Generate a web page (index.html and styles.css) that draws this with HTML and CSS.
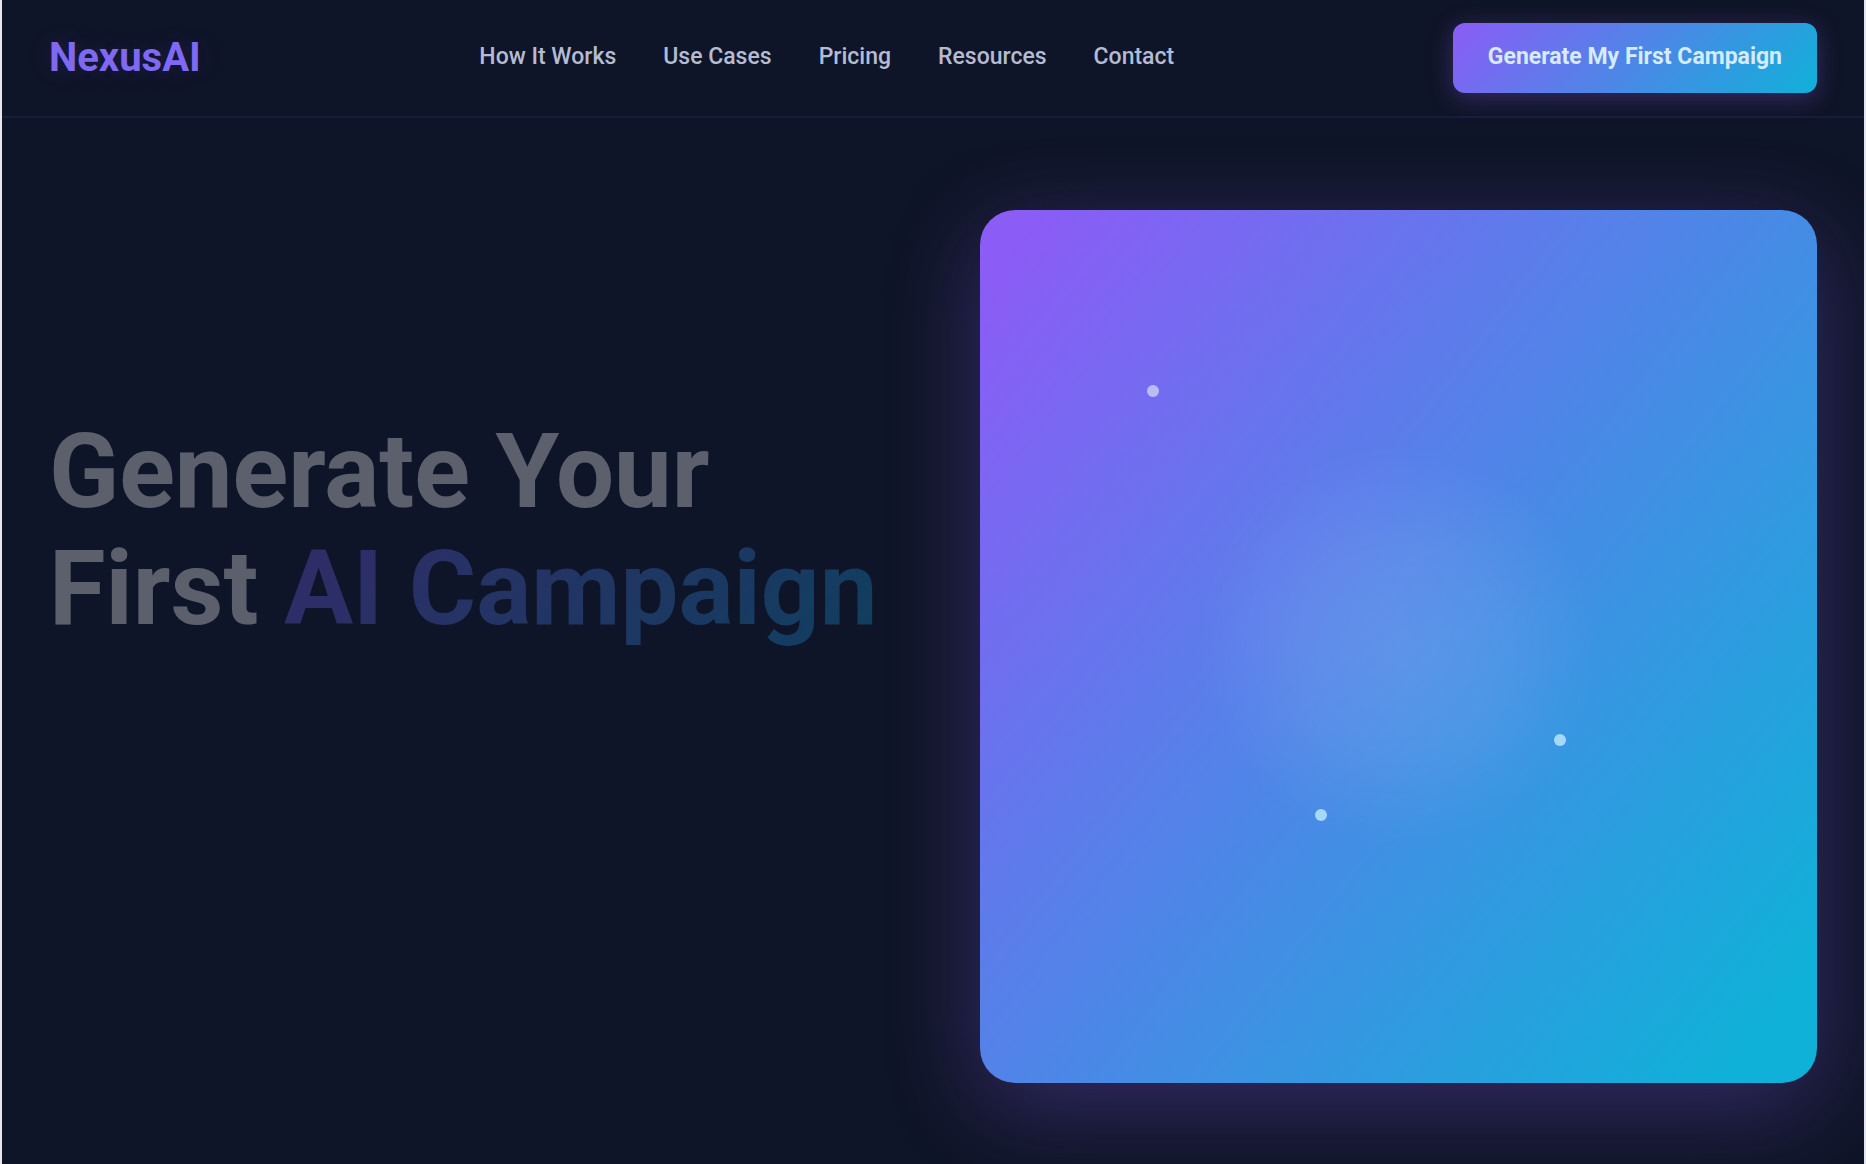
FILE: index.html
```html
<!DOCTYPE html>
<html lang="en">
<head>
  <meta charset="utf-8">
  <meta name="viewport" content="width=device-width, initial-scale=1">
  <title>NexusAI</title>
  <link rel="stylesheet" href="styles.css">
</head>
<body>
  <header class="header">
    <a class="logo" href="#">NexusAI</a>
    <nav class="nav" aria-label="Main">
      <a class="nav-link" href="#how">How It Works</a>
      <a class="nav-link" href="#cases">Use Cases</a>
      <a class="nav-link" href="#pricing">Pricing</a>
      <a class="nav-link" href="#resources">Resources</a>
      <a class="nav-link" href="#contact">Contact</a>
    </nav>
    <button class="cta" type="button">Generate My First Campaign</button>
  </header>
  <main class="hero">
    <div class="hero-copy">
      <h1 class="hero-title">Generate Your<br>First <span class="accent">AI Campaign</span></h1>
    </div>
    <div class="visual">
      <span class="dot dot-one"></span>
      <span class="dot dot-two"></span>
      <span class="dot dot-three"></span>
    </div>
  </main>
</body>
</html>
```
FILE: styles.css
```css
:root {
  --bg: #0f1528;
  --violet: #8b5cf6;
  --cyan: #0fb1d8;
}

* {
  box-sizing: border-box;
}

body {
  margin: 0;
  min-height: 100vh;
  overflow: hidden;
  background: var(--bg);
  border: solid #e4e6ec;
  border-width: 0 2px;
  color: #fff;
  font-family: Roboto, "Liberation Sans", sans-serif;
}

.header {
  display: flex;
  align-items: center;
  justify-content: space-between;
  padding: 23px 47px;
  border-bottom: 2px solid #191d3c;
}

.logo {
  color: #7e69f0;
  font-size: 40px;
  font-weight: 700;
  line-height: 48px;
  text-decoration: none;
  text-shadow: 0 0 24px rgba(139, 92, 246, 0.15);
}

.nav {
  display: flex;
  gap: 47px;
}

.nav-link {
  padding-bottom: 2px;
  color: #b4bbd2;
  font-size: 23px;
  font-weight: 500;
  line-height: 32px;
  text-decoration: none;
}

.cta {
  height: 70px;
  padding: 0 35px 2px;
  border: 0;
  border-radius: 12px;
  background: linear-gradient(135deg, var(--violet), var(--cyan));
  box-shadow: 0 5px 23px rgba(139, 92, 246, 0.3);
  color: #d6ebff;
  font: 700 23px/32px Roboto, "Liberation Sans", sans-serif;
}

.hero {
  display: grid;
  grid-template-columns: 1fr 1fr;
  gap: 93px;
  padding: 92px 47px;
}

.hero-copy {
  display: grid;
  grid-template-rows: 1fr 1fr;
}

.hero-title {
  align-self: end;
  margin: 0;
  font-size: 103px;
  font-weight: 700;
  line-height: 117px;
  white-space: nowrap;
  opacity: 0.32;
}

.accent {
  background: linear-gradient(135deg, #7c5cf0, #1298d4);
  background-clip: text;
  -webkit-background-clip: text;
  color: transparent;
}

.visual {
  position: relative;
  height: 75vh;
  border-radius: 35px;
  background:
    radial-gradient(circle, rgba(255, 255, 255, 0.1), rgba(255, 255, 255, 0.07) 100px, transparent 200px),
    linear-gradient(128deg, var(--violet) 4%, var(--cyan) 94%);
  box-shadow: 0 23px 93px rgba(139, 92, 246, 0.3);
}

.dot {
  position: absolute;
  width: 12px;
  height: 12px;
  border-radius: 50%;
  background: #a6d8fc;
}

.dot-one {
  top: 20%;
  left: 20%;
  background: #b9bdf3;
}

.dot-two {
  top: 60%;
  right: 30%;
}

.dot-three {
  bottom: 30%;
  left: 40%;
}
```
